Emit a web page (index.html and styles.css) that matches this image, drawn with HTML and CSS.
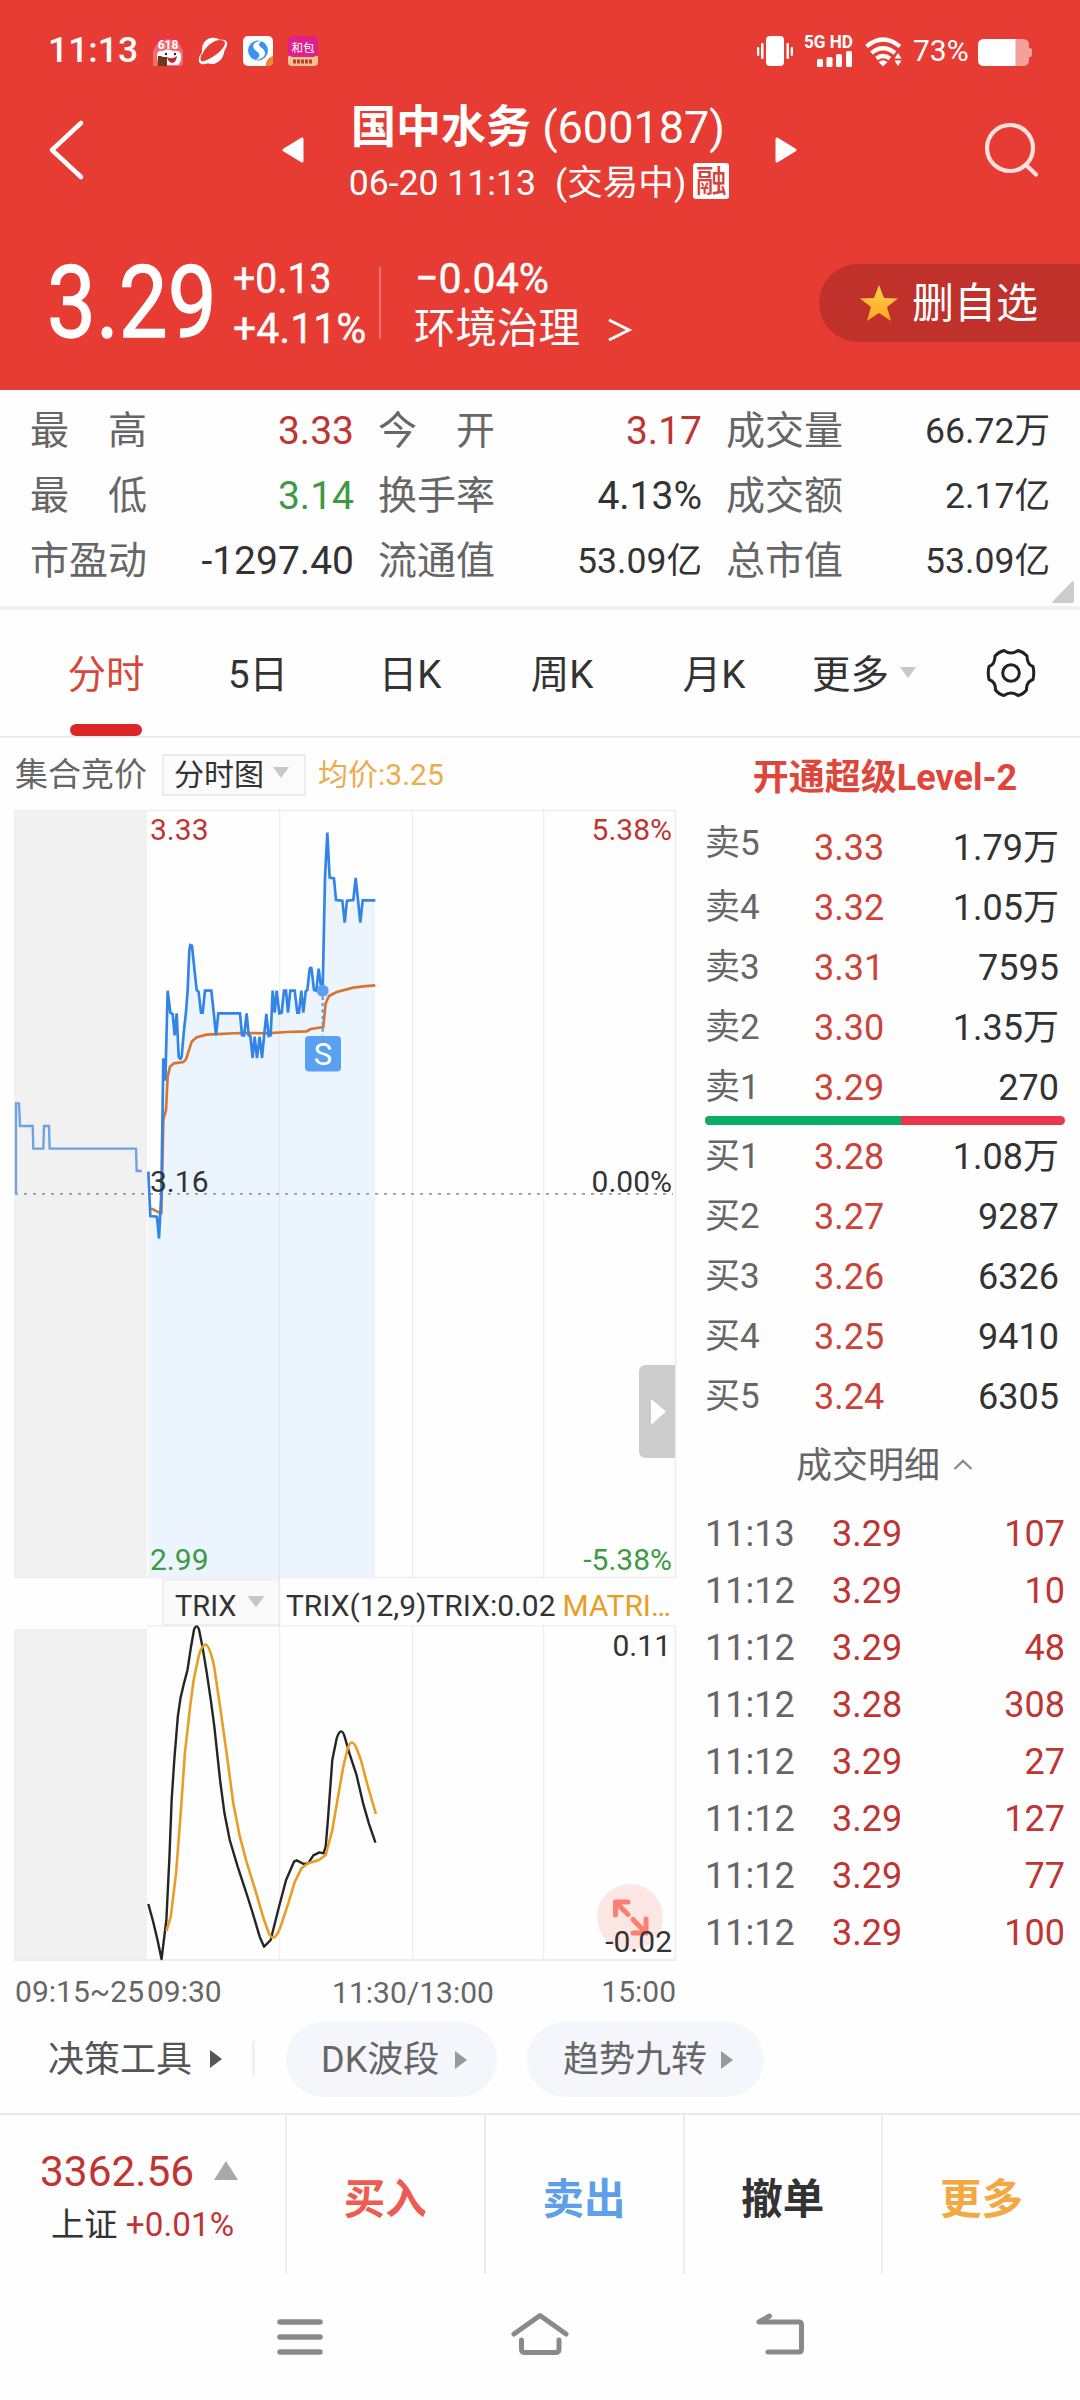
FILE: index.html
```html
<!DOCTYPE html>
<html lang="zh-CN">
<head>
<meta charset="utf-8">
<title>国中水务 600187</title>
<link rel="stylesheet" href="styles.css">
</head>
<body>
<header class="header">
  <div class="status">
    <span class="clock">11:13</span>
    <svg class="app-icon" viewBox="0 0 30 30">
      <rect width="30" height="30" rx="4" fill="#ee3545"/>
      <path d="M0 15Q4 4 15 3Q26 4 30 15V26Q30 30 26 30H0Z" fill="#f66a72"/>
      <text x="15" y="13" class="badge-618">618</text>
      <path d="M4 20Q4 14 10 15Q13 12 20 15Q27 14 28 19Q29 25 25 29H9Q4 26 4 20Z" fill="#fff"/>
      <circle cx="13" cy="18" r="1.2" fill="#222"/><circle cx="22" cy="18" r="1.2" fill="#222"/>
      <path d="M14 21Q19 24 24 20Q23 27 19 27Q15 26 14 21Z" fill="#c8202c"/>
      <path d="M5 20H8L10 21H14V30H5Z" fill="#6b3a1c"/>
    </svg>
    <svg class="app-icon" viewBox="0 0 30 30">
      <path d="M4 14C4 6 10 1 17 2C19 2 21 3 22 4C15 4 7 11 4 19ZM26 11C28 20 21 28 14 28C11 28 9 27 7 25C14 25 23 18 26 11Z" fill="#fff"/>
      <path d="M21 4C27 3 30 5 29 9C27 18 15 27 7 28C3 29 0 27 1 22C2 19 3 17 5 15C0 25 3 27 9 24C18 20 27 12 27 7C27 5 25 4 21 4Z" fill="#fff"/>
    </svg>
    <svg class="app-icon" viewBox="0 0 30 30">
      <rect width="30" height="30" rx="5" fill="#fff"/>
      <circle cx="15" cy="14.500" r="10" fill="#3c93ef"/>
      <path d="M19 5C11 5 8 10 12 14C16 17 19 19 13 24C22 23 24 17 20 13C16 10 14 8 19 5Z" fill="#fff"/>
      <path d="M23 30Q22 23 30 20V26Q29 30 25 30Z" fill="#e88a35"/>
    </svg>
    <svg class="app-icon" viewBox="0 0 30 30">
      <rect width="30" height="30" rx="5" fill="#e0208c"/>
      <path d="M0 20Q2 19 4 21H26Q28 19 30 20V26Q30 30 26 30H4Q0 30 0 26Z" fill="#f6c391"/>
      <text x="15" y="16" class="badge-wallet">和包</text>
      <path d="M5 25.500H25" stroke="#b7432e" stroke-width="4" stroke-dasharray="3 1"/>
    </svg>
    <svg class="signals" viewBox="755 30 150 40" fill="#fff">
      <rect x="766" y="36" width="18" height="30" rx="4"/>
      <rect x="761" y="43" width="2.500" height="16" rx="1"/><rect x="757" y="47" width="2.300" height="9" rx="1"/>
      <rect x="786.500" y="43" width="2.500" height="16" rx="1"/><rect x="790.700" y="47" width="2.300" height="9" rx="1"/>
      <text x="804" y="47.500" class="net" textLength="49" lengthAdjust="spacingAndGlyphs">5G HD</text>
      <rect x="817" y="59" width="6" height="8" rx="1.500"/><rect x="826.500" y="57" width="6" height="10" rx="1.500"/>
      <rect x="836" y="54" width="6" height="13" rx="1.500"/><rect x="846" y="51" width="6" height="16" rx="1.500"/>
      <g fill="none" stroke="#fff" stroke-width="4.200">
        <path d="M866.500 46.500Q883 32.500 900 46.500"/><path d="M871.500 53Q883 43.500 895 53"/><path d="M876.500 58.500Q883 53.500 890 58.500"/>
      </g>
      <path d="M878.500 62Q883 58.500 887.500 62L883 66.500ZM894.500 58.500L898 53L901.500 58.500ZM894.500 60.500H901.500L898 66Z"/>
    </svg>
    <span class="percent">73%</span>
    <svg class="battery" viewBox="0 0 54 27">
      <path d="M37 0H45Q51 0 51 6V9Q54 9 54 11V16Q54 18 51 18V21Q51 27 45 27H37Z" fill="#f5a09b"/>
      <path d="M6 0H37.500V27H6Q0 27 0 21V6Q0 0 6 0Z" fill="#fff"/>
    </svg>
  </div>

  <div class="titlebar">
    <svg class="back" viewBox="0 0 38 64"><path d="M33 5L4 32L33 59" fill="none" stroke="#fff" stroke-width="4.500" stroke-linecap="round" stroke-linejoin="round"/></svg>
    <svg class="prev" viewBox="0 0 22 26"><path d="M20 2V24L2 13Z" fill="#fff" stroke="#fff" stroke-width="3" stroke-linejoin="round"/></svg>
    <div class="title">
      <div class="name"><b>国中水务</b> (600187)</div>
      <div class="time"><span>06-20 11:13</span><span class="state">(交易中)</span><span class="margin-tag">融</span></div>
    </div>
    <svg class="next" viewBox="0 0 22 26"><path d="M2 2V24L20 13Z" fill="#fff" stroke="#fff" stroke-width="3" stroke-linejoin="round"/></svg>
    <svg class="search" viewBox="0 0 60 60" fill="none" stroke="#ffe0dd" stroke-width="4.200" stroke-linecap="round"><circle cx="27" cy="28" r="23"/><path d="M43.500 45.500L53 54.500"/></svg>
  </div>

  <div class="quote">
    <svg class="figures" viewBox="0 258 382 90" fill="#fff">
      <text transform="translate(47 337) scale(.87 1)" class="price">3.29</text>
      <text transform="translate(233 293) scale(.91 1)" class="delta">+0.13</text>
      <text transform="translate(233 342.500) scale(.955 1)" class="delta">+4.11%</text>
      <rect x="379" y="267" width="2" height="72" fill="#f0716a"/>
    </svg>
    <div class="sector">
      <svg class="sector-change" viewBox="415 258 140 40" fill="#fff"><text x="415" y="293" class="delta" textLength="134" lengthAdjust="spacingAndGlyphs">−0.04%</text></svg>
      <div class="sector-name">环境治理<svg viewBox="0 0 24 24"><path d="M1 2L21 12L1 22" fill="none" stroke="#fff" stroke-width="3"/></svg></div>
    </div>
    <div class="watch">
      <svg viewBox="0 0 40 37"><defs><linearGradient id="gold" x1="0" y1="0" x2="0" y2="1"><stop offset="0" stop-color="#ffd04e"/><stop offset="1" stop-color="#ffa820"/></linearGradient></defs><path d="M20 0L25 13L39 13.500L28 22L32 36L20 28L8 36L12 22L1 13.500L15 13Z" fill="url(#gold)"/></svg>
      <span>删自选</span>
    </div>
  </div>
</header>

<section class="stats">
  <div><label>最　高</label><span class="red">3.33</span></div>
  <div><label>今　开</label><span class="red">3.17</span></div>
  <div><label>成交量</label><span class="small">66.72万</span></div>
  <div><label>最　低</label><span class="green">3.14</span></div>
  <div><label>换手率</label><span>4.13%</span></div>
  <div><label>成交额</label><span class="small">2.17亿</span></div>
  <div><label>市盈动</label><span>-1297.40</span></div>
  <div><label>流通值</label><span class="small">53.09亿</span></div>
  <div><label>总市值</label><span class="small">53.09亿</span></div>
  <svg class="corner" viewBox="0 0 22 22"><path d="M20.500 0Q22 0 22 2V20Q22 22 20 22H1Q-0.500 22 0.500 20.500Z" fill="#ccc"/></svg>
</section>

<nav class="tabs">
  <span class="tab active">分时</span>
  <span class="tab">5日</span>
  <span class="tab">日K</span>
  <span class="tab">周K</span>
  <span class="tab">月K</span>
  <span class="tab-more">更多<svg viewBox="0 0 16 11"><path d="M0 0H16L8 11Z" fill="#c8c8c8"/></svg></span>
  <svg class="gear" viewBox="-26 -26 52 52" fill="none" stroke="#222" stroke-width="3" stroke-linejoin="round">
    <path d="M-7 -22.500Q0 -17.500 7 -22.500Q12.500 -21 16 -17Q16 -8.500 22 -6.500Q23.500 0 22 6.500Q15 9 15.500 17Q12 21.500 7 22.500Q0 17.500 -7 22.500Q-12 21.500 -15.500 17Q-15 9 -22 6.500Q-23.500 0 -22 -6.500Q-16 -8.500 -16 -17Q-12.500 -21 -7 -22.500Z"/>
    <circle r="8.300"/>
  </svg>
</nav>

<main class="main">
  <section class="chart-col">
    <div class="chart-tools">
      <span class="auction">集合竞价</span>
      <span class="select">分时图<svg viewBox="0 0 16 11"><path d="M0 0H16L8 11Z" fill="#c8c8c8"/></svg></span>
      <span class="avg">均价:3.25</span>
    </div>
    <svg class="chart" viewBox="0 809 690 1201">
      <rect x="14" y="810" width="133" height="768" fill="#f1f1f1"/>
      <path transform="translate(0 800) scale(.33333)" fill="#ecf4fe" d="M445 2332V1115L451 1248L471 1250L477 1316L484 1180L490 775L496 842L503 572L511 638L524 706L530 640L541 778L552 690L563 570L571 435L576 437L590 570L603 638L615 572H634L648 706L655 640H720L732 706L740 640L751 708L758 774L786 774L799 642L812 706L818 572L838 640L852 572L864 638L884 572L897 638L917 574L934 502L949 572L968 572L975 233L982 98L989 233L1002 235L1008 300L1034 368L1060 300L1067 234L1081 368L1088 301H1125V2332Z"/>
      <path d="M14 810.500H676M14 1577.500H676M147.500 1626H676" stroke="#efefef" stroke-width="1.500"/>
      <path d="M279.500 810V1960M412.500 810V1577M412.500 1626V1960M543.500 810V1577M543.500 1626V1960" stroke="#000" stroke-opacity=".055" stroke-width="1.300"/>
      <path d="M675.500 810V1578M675.500 1626V1961" stroke="#ededed" stroke-width="1.600"/>
      <rect x="14" y="1629" width="133" height="331" fill="#f1f1f1"/>
      <path d="M14 1960H676" stroke="#ececec" stroke-width="2"/>
      <path d="M15 1193.800H673" stroke="#999" stroke-width="1.800" stroke-dasharray="3 6"/>
      <g transform="translate(0 800) scale(.33333)" fill="none" stroke-linejoin="miter" stroke-miterlimit="2">
        <path stroke="#6ba3e4" stroke-width="7" d="M48 1180V910H57L60 978H98L100 1046H130L132 978H147L149 1046H408L410 1113H425"/>
        <path stroke="#d9742f" stroke-width="8" d="M453 1225L478 1238L484 1242L490 960L498 930L503 830L510 800L522 790L550 786L558 778L575 725L590 712L620 704L720 699L800 700L860 696L920 694L932 687L970 681L977 610L987 588L1010 576L1060 563L1090 559L1126 556"/>
        <path stroke="#3284e6" stroke-width="8" d="M445 1115L451 1248L471 1250L477 1316L484 1180L490 775L496 842L503 572L511 638L518 642L524 706L530 640L536 770L541 778L545 770L552 690L558 636L563 570L568 450L571 435L576 437L583 505L590 570L596 576L603 638H608L615 572H634L641 636L648 706L655 640H720L726 705L732 706L740 640L746 706L751 708L758 774L764 710L771 774L779 710L786 774L793 700L799 642L806 708L812 706L818 572L824 638L830 572L838 640L845 638L852 572H858L864 638L871 572H884L892 638H897L904 572L910 638L917 574L922 570L929 506L934 502L942 570L949 572L956 506L963 560L968 572L975 233L982 98L989 233L1002 235L1008 300L1027 302L1034 368L1041 302L1060 300L1067 234L1074 300L1081 368L1088 301H1126"/>
        <path stroke="#6b9bd8" stroke-width="7" stroke-dasharray="10 9" d="M968 590V706"/>
      </g>
      <circle cx="322.700" cy="990.700" r="6" fill="#5aa0f2"/>
      <rect x="305" y="1036" width="36" height="35.500" rx="4" fill="#5aa0f2"/>
      <text x="323" y="1065" class="mark">S</text>
      <g class="lbl">
        <text x="150" y="840" class="red">3.33</text>
        <text x="672" y="840" class="end red">5.38%</text>
        <text x="150" y="1192">3.16</text>
        <text x="672" y="1192" class="end">0.00%</text>
        <text x="150" y="1570" class="green">2.99</text>
        <text x="672" y="1570" class="end green">-5.38%</text>
      </g>
      <path d="M675 1365H646Q639 1365 639 1372V1451Q639 1458 646 1458H675Z" fill="#ccc"/>
      <path d="M651 1399L666 1411.500L651 1425Z" fill="#fff"/>

      <rect x="163" y="1579.500" width="116" height="45.500" fill="#fafafa" stroke="#ebebeb" stroke-width="1.600"/>
      <path d="M247.500 1596H264.500L256 1607.500Z" fill="#c8c8c8"/>
      <g class="lbl small">
        <text x="175" y="1616">TRIX</text>
        <text x="286" y="1616" textLength="269.500" lengthAdjust="spacingAndGlyphs">TRIX(12,9)TRIX:0.02</text>
        <text x="562.500" y="1616" class="amber" textLength="108.500" lengthAdjust="spacingAndGlyphs">MATRI…</text>
      </g>
      <circle cx="630" cy="1917" r="33" fill="#fde7e5"/>
      <path d="M628 1902H615.500V1915M616 1902.500L628 1914.500M633 1919.500L645.500 1932.500M646 1919V1933H633" fill="none" stroke="#fb7f72" stroke-width="5" stroke-linecap="round" stroke-linejoin="round"/>
      <g transform="translate(0 1540) scale(.44013 .33333)" fill="none" stroke-linejoin="round">
        <path vector-effect="non-scaling-stroke" stroke="#252525" stroke-width="2.400" d="M337 1092L347 1140L357 1195L367 1257L378 1140L385 950L390 780L396 660L404 530L410 475L418 430L426 390L434 320L441 268Q447 250 452 268L460 320L470 400L480 490L487 560L500 720L510 820L522 900L540 980L560 1060L572 1110L590 1190L600 1220L615 1200L632 1110L650 1020L668 965L674 961L690 972L700 970L712 946L726 937L735 940L740 920L745 840L755 660L765 595Q775 556 783 590L795 645L810 705L825 790L838 850L853 908"/>
        <path vector-effect="non-scaling-stroke" stroke="#e99d23" stroke-width="2.600" d="M378 1173L388 1130L400 1000L410 830L420 640L432 500L440 420L452 345Q460 312 468 314Q476 318 486 375L500 500L515 640L530 790L545 890L560 965L580 1050L600 1140L612 1184Q625 1212 640 1150L655 1090L670 1025L685 985L700 970L725 960L740 945L755 870L768 770L780 680L790 625Q799 590 810 625L820 660L835 735L854 822"/>
      </g>
      <g class="lbl">
        <text x="671" y="1656" class="end">0.11</text>
        <text x="672" y="1952" class="end">-0.02</text>
      </g>
      <g class="lbl axis">
        <text x="15" y="2002" textLength="129">09:15~25</text>
        <text x="147" y="2002">09:30</text>
        <text x="413" y="2003" class="mid">11:30/13:00</text>
        <text x="676" y="2002" class="end">15:00</text>
      </g>
    </svg>
  </section>

  <aside class="book">
    <div class="level2">开通超级Level-2</div>
    <div class="order first"><label>卖5</label><b>3.33</b><span>1.79万</span></div>
    <div class="order"><label>卖4</label><b>3.32</b><span>1.05万</span></div>
    <div class="order"><label>卖3</label><b>3.31</b><span>7595</span></div>
    <div class="order"><label>卖2</label><b>3.30</b><span>1.35万</span></div>
    <div class="order"><label>卖1</label><b>3.29</b><span>270</span></div>
    <div class="ratio"><i></i></div>
    <div class="order"><label>买1</label><b>3.28</b><span>1.08万</span></div>
    <div class="order"><label>买2</label><b>3.27</b><span>9287</span></div>
    <div class="order"><label>买3</label><b>3.26</b><span>6326</span></div>
    <div class="order"><label>买4</label><b>3.25</b><span>9410</span></div>
    <div class="order"><label>买5</label><b>3.24</b><span>6305</span></div>
    <div class="detail">成交明细<svg viewBox="0 0 20 14"><path d="M1.500 11L10 3L18.500 11" fill="none" stroke="#8c8c8c" stroke-width="2.400"/></svg></div>
    <div class="trade"><label>11:13</label><b>3.29</b><span>107</span></div>
    <div class="trade"><label>11:12</label><b>3.29</b><span>10</span></div>
    <div class="trade"><label>11:12</label><b>3.29</b><span>48</span></div>
    <div class="trade"><label>11:12</label><b>3.28</b><span>308</span></div>
    <div class="trade"><label>11:12</label><b>3.29</b><span>27</span></div>
    <div class="trade"><label>11:12</label><b>3.29</b><span>127</span></div>
    <div class="trade"><label>11:12</label><b>3.29</b><span>77</span></div>
    <div class="trade"><label>11:12</label><b>3.29</b><span>100</span></div>
  </aside>
</main>

<section class="tools">
  <span class="tool-main">决策工具<svg viewBox="0 0 12 18"><path d="M0 0L12 9L0 18Z" fill="#555"/></svg></span>
  <i class="sep"></i>
  <span class="pill dk">DK波段<svg viewBox="0 0 12 18"><path d="M0 0L12 9L0 18Z" fill="#999"/></svg></span>
  <span class="pill nine">趋势九转<svg viewBox="0 0 12 18"><path d="M0 0L12 9L0 18Z" fill="#999"/></svg></span>
</section>

<footer class="actions">
  <div class="index">
    <div class="index-value">3362.56<svg viewBox="0 0 24 19"><path d="M12 0L24 19H0Z" fill="#a6a9ae"/></svg></div>
    <div class="index-name">上证 <span class="red">+0.01%</span></div>
  </div>
  <div class="act buy">买入</div>
  <div class="act sell">卖出</div>
  <div class="act cancel">撤单</div>
  <div class="act more">更多</div>
</footer>

<div class="sysnav">
  <svg viewBox="270 2300 544 70" fill="none" stroke="#8a8a8a" stroke-width="5.500" stroke-linecap="round" stroke-linejoin="round">
    <path d="M280 2322H320M280 2337H320M280 2352H320"/>
    <path d="M514 2334L540 2315.500L566 2334M521.500 2340V2349Q521.500 2352.500 525 2352.500H555.500Q559 2352.500 559 2349V2340" stroke-width="5"/>
    <path d="M769.500 2316L759 2322H799Q801.500 2322 801.500 2325V2349Q801.500 2352 799 2352H768" stroke-width="5"/>
  </svg>
</div>
</body>
</html>
```
FILE: styles.css
```css
* { box-sizing: border-box; }
body {
  margin: 0;
  width: 1080px;
  height: 2400px;
  overflow: hidden;
  background: #fefefe;
  color: #333;
  font-family: Roboto, "Noto Sans CJK SC", sans-serif;
}
svg { display: block; flex: none; overflow: visible; }
.red { color: #bf3533; fill: #bf3533; }
.green { color: #3d9a42; fill: #3d9a42; }

/* header */
.header { height: 390px; background: #e73c33; color: #fff; }
.status { display: flex; align-items: center; height: 100px; padding: 2px 0 0 48px; }
.clock { width: 105px; font-size: 35.5px; font-weight: 500; line-height: 40px; margin-top: -2px; }
.app-icon { width: 30px; height: 30px; margin-right: 15px; }
.badge-618 { font-size: 12px; font-weight: 700; fill: #fff; text-anchor: middle; }
.badge-wallet { font-size: 11.5px; fill: #fff; text-anchor: middle; }
.signals { width: 150px; height: 40px; margin: -2px 0 0 422px; }
.net { font-size: 18px; font-weight: 700; }
.percent { width: 65px; margin-left: 8px; font-size: 30px; line-height: 40px; }
.battery { width: 54px; height: 27px; margin-top: 3px; }

.titlebar { display: flex; align-items: flex-start; height: 108px; }
.back { width: 38px; height: 64px; margin: 18px 0 0 48px; }
.prev { width: 22px; height: 26px; margin: 37px 0 0 196px; }
.title { width: 420px; margin: 0 27px 0 24px; text-align: center; }
.name { font-size: 45px; line-height: 56px; white-space: pre; }
.name b { font-weight: 700; font-family: "Noto Sans CJK SC"; line-height: 1; }
.time { display: flex; align-items: center; justify-content: center; height: 52px; padding: 2px 0 0 2px; font-size: 35.6px; line-height: 50px; white-space: nowrap; }
.state { margin-left: 19px; }
.margin-tag { width: 36px; height: 36px; margin: -5px 0 0 7px; border-radius: 3px; background: #fff; color: #d7423a; font-size: 31px; font-weight: 500; line-height: 37px; text-align: center; }
.next { width: 22px; height: 26px; margin-top: 37px; }
.search { width: 60px; height: 60px; margin: 20px 0 0 186px; }

.quote { display: flex; align-items: flex-start; height: 182px; padding-top: 50px; }
.figures { width: 382px; height: 90px; }
.price { font-size: 100px; stroke: #fff; stroke-width: 1.4px; }
.delta { font-size: 43px; stroke: #fff; stroke-width: .4px; }
.sector { width: 404px; padding-left: 33px; }
.sector-change { width: 140px; height: 40px; }
.sector-name { display: flex; align-items: center; height: 50px; padding-top: 12px; font-size: 41.5px; line-height: 50px; margin-left: -1px; }
.sector-name svg { width: 24px; height: 24px; margin: 1px 0 0 28px; }
.watch { display: flex; align-items: center; flex: 1; margin-left: 33px; height: 78px; margin-top: 6px; padding-left: 40px; border-radius: 39px 0 0 39px; background: #bf312a; font-size: 42px; line-height: 60px; }
.watch svg { width: 40px; height: 37px; margin-right: 13px; }
.watch span { padding-top: 2px; }

/* statistics */
.stats { position: relative; display: grid; grid-template-columns: repeat(3, 323px); column-gap: 25px; grid-auto-rows: 65px; height: 220px; padding: 8px 0 0 30px; border-bottom: 4px solid #f1f1f1; }
.stats > div { display: flex; justify-content: space-between; align-items: center; font-size: 39px; line-height: 60px; white-space: nowrap; }
.stats > div span { margin-right: -1px; }
.stats label { color: #666; }
.stats .small { font-size: 35.6px; }
.corner { position: absolute; right: 6px; bottom: 3px; width: 22px; height: 22px; }

/* period tabs */
.tabs { display: flex; height: 128px; padding-left: 30px; border-bottom: 2px solid #ececec; font-size: 38.5px; line-height: 60px; }
.tab { display: flex; flex-direction: column; justify-content: space-between; align-items: center; width: 152px; padding-top: 35px; }
.tab.active { color: #d5473b; }
.tab.active::after { content: ""; width: 72px; height: 12px; border-radius: 6px; background: #dd2628; }
.tab-more { display: flex; align-items: center; height: 60px; margin: 35px 0 0 22px; width: 173px; }
.tab-more svg { width: 16px; height: 11px; margin: -5px 0 0 11px; }
.gear { width: 52px; height: 52px; margin-top: 37px; }

/* chart */
.main { display: flex; height: 1272px; }
.chart-col { width: 690px; }
.chart-tools { display: flex; align-items: center; height: 71px; padding: 2px 0 0 15px; white-space: nowrap; }
.auction { width: 147px; font-size: 33px; line-height: 40px; color: #666; }
.select { display: flex; align-items: center; width: 144px; height: 42px; padding-left: 10px; border: 2px solid #ececec; background: #fbfbfb; font-size: 30px; line-height: 38px; }
.select svg { width: 16px; height: 11px; margin: -4px 0 0 9px; }
.avg { margin-left: 12px; font-size: 30px; line-height: 40px; color: #ecac4c; }
.chart { width: 690px; height: 1201px; }
.lbl { font-size: 30px; fill: #333; }
.lbl.small { font-size: 29px; }
.lbl.axis { font-size: 30px; fill: #666; }
.lbl .amber { fill: #e99d23; }
.end { text-anchor: end; }
.mid { text-anchor: middle; }
.mark { font-size: 31px; fill: #fff; text-anchor: middle; }

/* order book */
.book { width: 390px; padding: 0 15px 0 15px; font-size: 36px; }
.level2 { height: 80px; font-size: 36px; font-weight: 700; line-height: 81px; color: #e0453a; text-align: center; white-space: nowrap; }
.order, .trade { display: flex; align-items: center; height: 60px; line-height: 50px; white-space: nowrap; }
.order label, .trade label { width: 109px; color: #666; }
.order b { font-weight: 400; color: #ca4439; }
.order span { margin: 0 6px 0 auto; }
.order label { font-size: 35px; }
.order.first label { margin-bottom: 8px; }
.ratio { height: 9px; margin: -2px 0 2px; border-radius: 5px; background: #e8374b; overflow: hidden; }
.ratio i { display: block; width: 196px; height: 9px; background: #08ae68; }
.detail { display: flex; align-items: center; height: 78px; padding: 0 0 1px 91px; color: #666; line-height: 50px; }
.detail svg { width: 20px; height: 14px; margin: -2px 0 0 13px; }
.trade { height: 57px; }
.trade label { width: 127px; }
.trade b { font-weight: 400; color: #bf3533; }
.trade span { margin-left: auto; color: #bf3533; }

/* strategy tools */
.tools { display: flex; height: 103px; padding: 12px 0 0 48px; font-size: 36px; line-height: 79px; color: #666; white-space: nowrap; }
.tools svg { width: 12px; height: 18px; }
.tools span { display: flex; align-items: center; height: 75px; }
.tool-main { width: 204px; color: #555; }
.tool-main svg { margin: -3px 0 0 18px; }
.tools span { padding-top: 2px; }
.sep { width: 3px; height: 36px; margin: 19px 31px 0 0; background: #f1f1f1; }
.pill { border-radius: 38px; background: #f5f6fb; }
.dk { width: 211px; padding-left: 35px; margin-right: 30px; }
.dk svg { margin: -2px 0 0 16px; }
.nine { width: 237px; padding-left: 36px; }
.nine svg { margin: -2px 0 0 14px; }

/* trading bar */
.actions { display: flex; height: 161px; border-top: 2px solid #e9e9e9; }
.index { width: 285px; padding-top: 31px; }
.index-value { display: flex; align-items: center; height: 52px; padding-left: 40px; font-size: 42.4px; line-height: 52px; color: #bf3533; }
.index-value svg { width: 24px; height: 19px; margin: -4px 0 0 20px; }
.index-name { padding-left: 51px; font-size: 33.3px; line-height: 54px; white-space: pre; }
.act { flex: 1; padding-top: 54px; border-left: 2px solid #ebebeb; font-size: 41.5px; font-weight: 700; line-height: 61px; text-align: center; }
.buy { color: #ee5b50; }
.sell { color: #5d9fe8; }
.cancel { color: #333; }
.more { color: #f3a841; }

.sysnav { display: flex; justify-content: center; height: 126px; padding: 26px 0 0 4px; }
.sysnav svg { width: 544px; height: 70px; }
```
